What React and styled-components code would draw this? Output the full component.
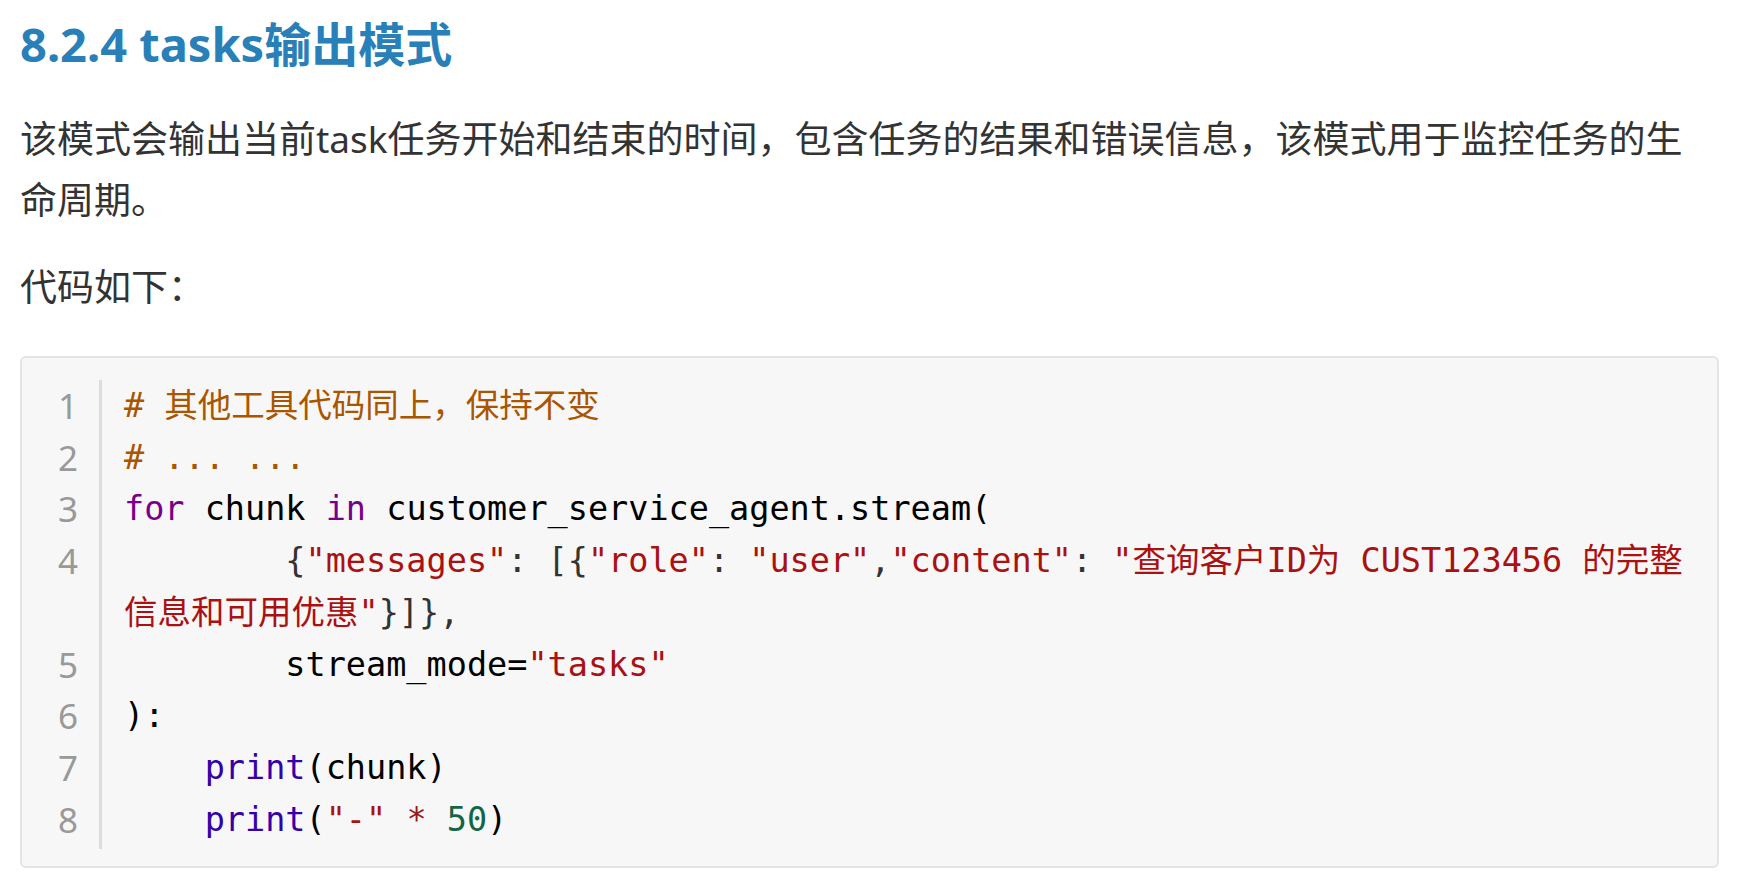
import React from "react";
import styled, { createGlobalStyle } from "styled-components";

const Global = createGlobalStyle`
  html, body { margin: 0; padding: 0; background: #ffffff; }
  body { font-family: "Noto Sans", "Noto Sans CJK SC", sans-serif; }
`;

const Page = styled.div`
  width: 1699px;
  padding: 17px 0 0 20px;
`;

const Heading = styled.h4`
  margin: 0;
  font-family: "Noto Sans", "Noto Sans CJK SC", sans-serif;
  font-weight: 700;
  font-size: 47px;
  line-height: 55px;
  color: #2980b9;
`;

const Paragraph = styled.p`
  margin: ${(p) => p.$gap}px 0 0;
  font-family: "Noto Sans", "Noto Sans CJK SC", sans-serif;
  font-size: 37px;
  line-height: 61px;
  color: #333333;
`;

const CodeBlock = styled.div`
  margin-top: 39px;
  box-sizing: border-box;
  width: 1699px;
  background: #f7f7f7;
  border: 2px solid #e2e4e7;
  border-radius: 6px;
  padding: 22px 0 17px;
`;

const CodeGrid = styled.div`
  display: grid;
  grid-template-columns: 80px 1fr;
`;

const LineNo = styled.div`
  box-sizing: border-box;
  border-right: 3px solid #dddddd;
  padding: 0 21px ${(p) => (p.$last ? 4 : 0)}px 0;
  text-align: right;
  font-family: "Noto Sans", sans-serif;
  font-size: 35px;
  line-height: 51.7px;
  color: #999999;
`;

const CodeLine = styled.div`
  padding: 0 22px ${(p) => (p.$last ? 4 : 0)}px 22px;
  font-family: "DejaVu Sans Mono", "Noto Sans CJK SC", monospace;
  font-size: 33.5px;
  line-height: 51.7px;
  color: #000000;
  white-space: pre-wrap;
  word-break: break-all;
`;

const colors = {
  comment: "#aa5500",
  keyword: "#770088",
  string: "#aa1111",
  builtin: "#3300aa",
  number: "#116644",
  punct: "#333333",
  operator: "#981a1a",
  plain: "#000000",
};

const Tok = styled.span`
  color: ${(p) => colors[p.$k] || "#000"};
`;

const lines = [
  [["comment", "# 其他工具代码同上，保持不变"]],
  [["comment", "# ... ..."]],
  [
    ["keyword", "for"],
    ["plain", " chunk "],
    ["keyword", "in"],
    ["plain", " customer_service_agent.stream("],
  ],
  [
    ["plain", "        "],
    ["punct", "{"],
    ["string", '"messages"'],
    ["punct", ": [{"],
    ["string", '"role"'],
    ["punct", ": "],
    ["string", '"user"'],
    ["punct", ","],
    ["string", '"content"'],
    ["punct", ": "],
    ["string", '"查询客户ID为 CUST123456 的完整'],
    ["string", '信息和可用优惠"'],
    ["punct", "}]},"],
  ],
  [
    ["plain", "        stream_mode="],
    ["string", '"tasks"'],
  ],
  [["plain", "):"]],
  [
    ["plain", "    "],
    ["builtin", "print"],
    ["plain", "(chunk)"],
  ],
  [
    ["plain", "    "],
    ["builtin", "print"],
    ["plain", "("],
    ["string", '"-"'],
    ["plain", " "],
    ["operator", "*"],
    ["plain", " "],
    ["number", "50"],
    ["plain", ")"],
  ],
];

export default function App() {
  return (
    <>
      <Global />
      <Page>
        <Heading>8.2.4 tasks输出模式</Heading>
        <Paragraph $gap={36}>
          该模式会输出当前task任务开始和结束的时间，包含任务的结果和错误信息，该模式用于监控任务的生命周期。
        </Paragraph>
        <Paragraph $gap={26}>代码如下：</Paragraph>
        <CodeBlock>
          <CodeGrid>
            {lines.map((toks, i) => {
              const last = i === lines.length - 1;
              return (
                <React.Fragment key={i}>
                  <LineNo $last={last}>{i + 1}</LineNo>
                  <CodeLine $last={last}>
                    {toks.map(([k, t], j) => (
                      <Tok key={j} $k={k}>
                        {t}
                      </Tok>
                    ))}
                  </CodeLine>
                </React.Fragment>
              );
            })}
          </CodeGrid>
        </CodeBlock>
      </Page>
    </>
  );
}
